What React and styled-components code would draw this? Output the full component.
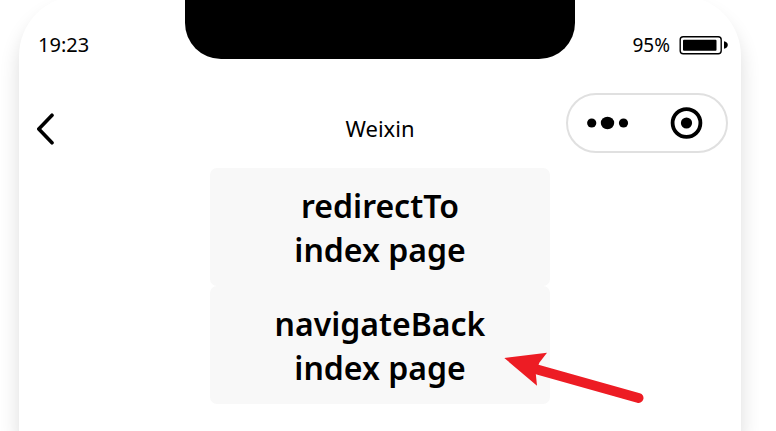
import React from "react";
import styled, { createGlobalStyle } from "styled-components";

const BatteryIcon = () => (
  <svg width="50" height="20" viewBox="0 0 50 20" aria-hidden="true">
    <rect x="2.2" y="1.7" width="41" height="17" rx="3" fill="none" stroke="#000" strokeWidth="1.4" />
    <rect x="5" y="4.700" width="33.5" height="11" rx="1" fill="#000" />
    <path d="M46 6.300c2.200.5 3.800 1.700 3.800 3.700s-1.600 3.200-3.800 3.700z" fill="#000" />
  </svg>
);

const BackIcon = () => (
  <svg width="20" height="34" viewBox="0 0 20 34" aria-hidden="true">
    <path
      d="M15 3.200L1.800 17L15 30.800"
      fill="none"
      stroke="#000"
      strokeWidth="3.600"
      strokeLinecap="round"
      strokeLinejoin="round"
    />
  </svg>
);

const MoreIcon = () => (
  <svg width="42" height="14" viewBox="0 0 42 14" aria-hidden="true">
    <circle cx="4.700" cy="7" r="4.600" />
    <ellipse cx="20.500" cy="7" rx="6.700" ry="6.200" />
    <circle cx="36.500" cy="7" r="4.600" />
  </svg>
);

const CloseIcon = () => (
  <svg width="34" height="34" viewBox="0 0 34 34" aria-hidden="true">
    <circle cx="16.500" cy="17" r="13.900" fill="none" stroke="#000" strokeWidth="3.800" />
    <circle cx="16.500" cy="17" r="5.600" />
  </svg>
);

const ArrowIcon = () => (
  <svg width="140" height="52" viewBox="0 0 140 52" aria-hidden="true">
    <path d="M34 17.700L134.500 46" stroke="#ed1c24" strokeWidth="10" strokeLinecap="round" />
    <path d="M0.300 6L43 0.700L35.300 10.700L31.700 20.700L33 33.700Z" fill="#ed1c24" />
  </svg>
);

const pages = [
  { id: "redirect", action: "redirectTo" },
  { id: "back", action: "navigateBack", marked: true },
];

const App = () => {
  return (
    <>
      <GlobalStyle />
      <Phone>
        <StatusBar>
          <Time>19:23</Time>
          <Notch />
          <Battery>
            95%
            <BatteryIcon />
          </Battery>
        </StatusBar>
        <NavBar>
          <BackButton type="button" aria-label="Back">
            <BackIcon />
          </BackButton>
          <Title>Weixin</Title>
          <Capsule>
            <CapsuleButton type="button" aria-label="More">
              <MoreIcon />
            </CapsuleButton>
            <CapsuleButton type="button" aria-label="Close">
              <CloseIcon />
            </CapsuleButton>
          </Capsule>
        </NavBar>
        <Content>
          {pages.map((page) => (
            <PageItem key={page.id}>
              <PageButton type="button">
                {page.action}
                <br />
                index page
              </PageButton>
              {page.marked && (
                <Pointer>
                  <ArrowIcon />
                </Pointer>
              )}
            </PageItem>
          ))}
        </Content>
      </Phone>
    </>
  );
};

export default App;

// Styled Components

const GlobalStyle = createGlobalStyle`
  * {
    box-sizing: border-box;
  }

  body {
    margin: 0;
    background-color: #fff;
    color: #000;
    font-family: "Noto Sans", "Open Sans", sans-serif;
  }

  svg {
    display: block;
    flex: none;
  }
`;

const Phone = styled.main`
  min-height: calc(100vh + 4px);
  margin: -4px 35px 0 19px;
  padding-top: 4px;
  background-color: #fff;
  border-radius: 60px 60px 0 0;
  box-shadow: 0 14px 20px rgba(0, 0, 0, 0.14);
`;

const StatusBar = styled.div`
  display: grid;
  grid-template-columns: 1fr minmax(0, 390px) 1fr;
`;

const Time = styled.span`
  padding: 31px 0 0 19px;
  font-size: 20px;
  line-height: 28px;
`;

const Notch = styled.div`
  height: 59px;
  background-color: #000;
  border-radius: 0 0 36px 36px;
`;

const Battery = styled.div`
  display: flex;
  align-items: center;
  justify-content: flex-end;
  gap: 8px;
  padding: 31px 13px 0 0;
  font-size: 19px;
  line-height: 28px;
`;

const NavBar = styled.header`
  display: grid;
  grid-template-columns: 1fr auto 1fr;
  align-items: end;
  padding: 34px 13px 0;
`;

const BackButton = styled.button`
  display: flex;
  align-items: center;
  justify-self: start;
  height: 48px;
  padding: 0 0 0 5px;
  border: none;
  background: none;
  cursor: pointer;
`;

const Title = styled.h1`
  margin: 0;
  font-size: 22px;
  font-weight: 400;
  line-height: 50px;
`;

const Capsule = styled.div`
  display: grid;
  grid-template-columns: 1fr 1fr;
  justify-self: end;
  width: 162px;
  height: 60px;
  border: 2px solid #e0e0e0;
  border-radius: 30px;
`;

const CapsuleButton = styled.button`
  display: flex;
  align-items: center;
  justify-content: center;
  padding: 0;
  border: none;
  background: none;
  cursor: pointer;
`;

const Content = styled.div`
  display: flex;
  flex-direction: column;
  align-items: center;
  padding-top: 15px;
`;

const PageItem = styled.div`
  position: relative;
  width: 340px;
  max-width: 100%;
`;

const PageButton = styled.button`
  width: 100%;
  padding: 16px 28px 14px;
  border: none;
  border-radius: 7px;
  background-color: #f8f8f8;
  color: #000;
  font-family: inherit;
  font-size: 32px;
  font-weight: 600;
  line-height: 44px;
  text-align: center;
  cursor: pointer;
`;

const Pointer = styled.div`
  position: absolute;
  top: 66px;
  left: 294px;
  pointer-events: none;
`;
